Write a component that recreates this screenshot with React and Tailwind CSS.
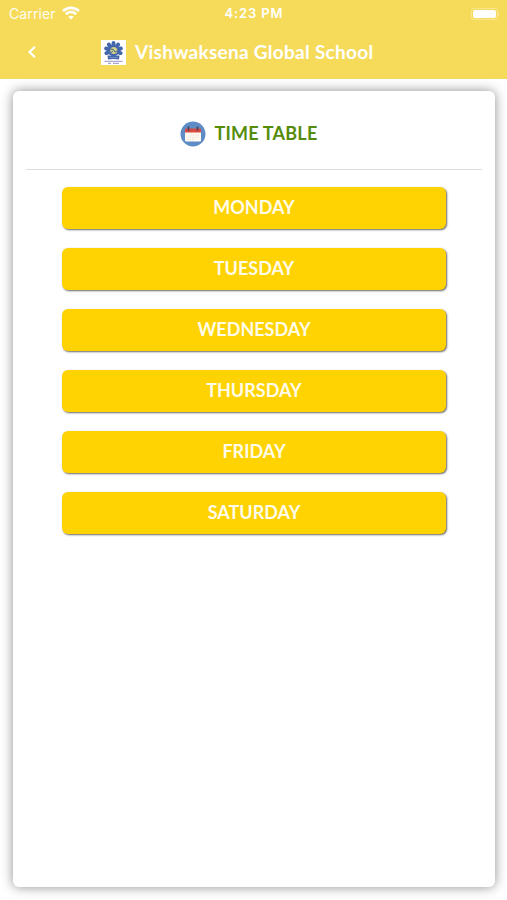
import React, { useState } from 'react';

const days = ['MONDAY', 'TUESDAY', 'WEDNESDAY', 'THURSDAY', 'FRIDAY', 'SATURDAY'];

const WifiIcon = () => (
  <svg className="w-[18px] h-[14px] -mt-[2px]" viewBox="0 0 18 14" fill="none" stroke="white" strokeWidth="2.7">
    <path d="M1 5.1C5.6.7 12.4.7 17 5.1" />
    <path d="M3.9 8.200c3-2.800 7.200-2.800 10.200 0" />
    <path d="M9 13.600 6.300 10.800c1.500-1.400 3.900-1.400 5.400 0z" fill="white" stroke="none" />
  </svg>
);

const SchoolLogo = () => (
  <svg className="w-[25px] h-[25px] bg-white" viewBox="0 0 25 25">
    <g fill="#4466ad">
      {[-110, -75, -38, 0, 38, 75, 110].map((angle) => (
        <ellipse key={angle} cx="12.500" cy="3.800" rx="2" ry="2.900" transform={`rotate(${angle} 12.5 10.5)`} />
      ))}
      <circle cx="12.500" cy="10.500" r="5.800" />
      <path d="M6.500 15.500h12l-.5 4c-3.500-.8-7.500-.8-11 0z" />
    </g>
    <circle cx="12.800" cy="10.500" r="3.500" fill="#d3d184" />
    <path d="m9.500 9 3 .5 1.500 2.500 2-1M10 12.500l2-1.500" stroke="#456b8f" strokeWidth="1" fill="none" />
    <path d="M8.500 17.500h8" stroke="#93a7d2" strokeWidth=".6" />
    <path d="M3.500 21.300h18M7 23.300h3m2 0h6" stroke="#8984c2" strokeWidth=".9" />
  </svg>
);

const CalendarIcon = () => (
  <svg className="w-[26px] h-[26px]" viewBox="0 0 26 26">
    <circle cx="13" cy="13" r="12.500" fill="#5d8cc6" />
    <path d="M5 11h16v8.500a1 1 0 0 1-1 1H6a1 1 0 0 1-1-1z" fill="#fff9ef" />
    <path d="M5 11.500V8.500a1 1 0 0 1 1-1h14a1 1 0 0 1 1 1v3z" fill="#d84b43" />
    <path d="M8.500 6v3M17.500 6v3" stroke="#4c4658" strokeWidth="1.700" strokeLinecap="round" />
    <path d="M10 14h9M7 16.300h12M7 18.500h7" stroke="#e4e1da" strokeWidth=".9" strokeDasharray="1.500 1" />
  </svg>
);

const App = () => {
  const [selectedDay, setSelectedDay] = useState(null);

  return (
    <div className="w-full h-[900px] bg-white flex flex-col overflow-hidden font-['Lato',sans-serif]">
      {/* Status bar */}
      <div className="h-[27px] shrink-0 bg-[#f6db5b] grid grid-cols-3 items-center pl-[9px] pr-[8px] text-white font-['Inter',sans-serif]">
        <div className="flex items-center gap-[6px]">
          <span className="text-[14px] leading-[27px] tracking-[0.1px] text-white/90">Carrier</span>
          <WifiIcon />
        </div>
        <span className="text-[13px] leading-[27px] font-semibold text-center tracking-[0.850px]">4:23 PM</span>
        <div className="flex justify-end items-center">
          <div className="w-[27px] h-[12px] rounded-[3px] border border-white/30 p-px">
            <div className="w-full h-full bg-white rounded-[2px]" />
          </div>
          <div className="w-px h-1 bg-white/30" />
        </div>
      </div>

      {/* Header */}
      <header className="h-[52px] shrink-0 bg-[#f6db5b] flex items-center pl-[27px] pb-[2px]">
        <button className="w-[10px] h-[14px]" aria-label="Back">
          <svg className="w-[10px] h-[14px]" viewBox="0 0 10 14" fill="none" stroke="white" strokeWidth="2.200">
            <path d="M8 1.800 2.500 7 8 12.200" />
          </svg>
        </button>
        <div className="ml-[64px] flex items-center gap-[9px]">
          <SchoolLogo />
          <h1 className="text-white text-[19px] leading-6 font-bold tracking-[0.280px] whitespace-nowrap">Vishwaksena Global School</h1>
        </div>
      </header>

      {/* Timetable card */}
      <main className="h-[796px] shrink-0 mt-[12px] ml-[13px] mr-[12px] px-[13px] bg-white rounded-[6px] shadow-[0_0_12px_rgba(0,0,0,0.45)]">
        <div className="h-[79px] pt-px flex justify-center items-center gap-[9px] border-b border-[#dedede] pr-[11px]">
          <div className="mt-[6px]"><CalendarIcon /></div>
          <h2 className="mt-[5px] text-[#568c0b] text-[18px] leading-6 font-bold tracking-[0.200px]">TIME TABLE</h2>
        </div>
        <div className="mt-[17px] px-[36px] flex flex-col gap-[19px]">
          {days.map((day) => (
            <button
              key={day}
              onClick={() => setSelectedDay(day)}
              aria-pressed={selectedDay === day}
              className="h-[42px] pb-[2px] rounded-[6px] bg-[#ffd302] text-[#fffbe9] text-[18px] leading-[40px] font-bold text-center shadow-[1px_1px_2px_rgba(0,0,0,0.6)]"
            >
              {day}
            </button>
          ))}
        </div>
      </main>
    </div>
  );
};

export default App;
